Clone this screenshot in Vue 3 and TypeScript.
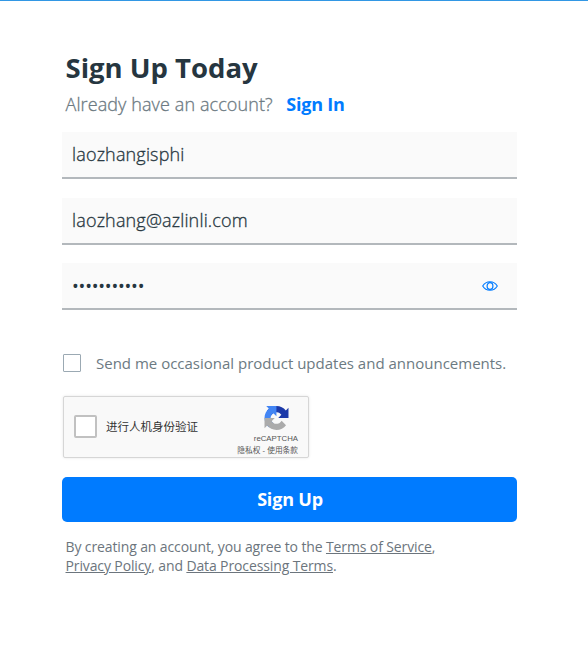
<script setup lang="ts">
import { ref } from 'vue'

const username = ref('laozhangisphi')
const email = ref('laozhang@azlinli.com')
const password = ref('laozhang123')
const showPassword = ref(false)
const updates = ref(false)
const human = ref(false)
</script>

<template>
  <main class="page">
    <header class="intro">
      <h1>Sign Up Today</h1>
      <p><span class="question">Already have an account?</span><a class="signin">Sign In</a></p>
    </header>
    <form class="form" @submit.prevent>
      <div class="field">
        <input v-model="username" type="text" spellcheck="false" />
      </div>
      <div class="field">
        <input v-model="email" type="text" spellcheck="false" />
      </div>
      <div class="field">
        <input v-model="password" class="secret" :type="showPassword ? 'text' : 'password'" />
        <button type="button" class="eye" @click="showPassword = !showPassword">
          <svg width="16" height="10" viewBox="0 0 16 10" fill="none" stroke="#007bff">
            <path d="M.7 5C2.5 2 5 .7 8 .7S13.500 2 15.300 5C13.500 8 11 9.300 8 9.300S2.500 8 .7 5Z" stroke-width="1.100" />
            <ellipse cx="8" cy="5" rx="2.900" ry="3.300" stroke-width="1.200" />
          </svg>
        </button>
      </div>
      <label class="updates">
        <input v-model="updates" type="checkbox" />
        <span>Send me occasional product updates and announcements.</span>
      </label>
      <div class="captcha">
        <label class="verify">
          <input v-model="human" type="checkbox" />
          <span>进行人机身份验证</span>
        </label>
        <div class="brand">
          <svg width="25" height="25" viewBox="0 0 64 64">
            <path fill="#1c3aa9" d="M64 31.955l-.033-1.370V4.687l-7.160 7.160C50.948 4.674 42.033.093 32.050.093c-10.400 0-19.622 4.960-25.458 12.640l11.736 11.860a15.550 15.550 0 0 1 4.754-5.334c2.050-1.600 4.952-2.906 8.968-2.906.485 0 .860.057 1.135.163 4.976.393 9.288 3.140 11.828 7.124l-8.307 8.307L64 31.953" />
            <path fill="#4285f4" d="M31.862.094l-1.370.033H4.594l7.160 7.160C4.580 13.147 0 22.060 0 32.046c0 10.400 4.960 19.622 12.640 25.458L24.500 45.768a15.550 15.550 0 0 1-5.334-4.754c-1.600-2.050-2.906-4.952-2.906-8.968 0-.485.057-.860.163-1.135.393-4.976 3.140-9.288 7.124-11.828l8.307 8.307L31.860.095" />
            <path fill="#ababab" d="M.001 32.045l.033 1.370v25.898l7.160-7.160c5.860 7.173 14.774 11.754 24.760 11.754 10.400 0 19.622-4.960 25.458-12.640l-11.736-11.860a15.550 15.550 0 0 1-4.754 5.334c-2.050 1.600-4.952 2.906-8.968 2.906-.485 0-.860-.057-1.135-.163-4.976-.393-9.288-3.140-11.828-7.124l8.307-8.307c-10.522.040-22.400.066-27.295-.005" />
          </svg>
          <span class="name">reCAPTCHA</span>
          <span class="terms">隐私权 - 使用条款</span>
        </div>
      </div>
      <button class="submit" type="submit">Sign Up</button>
    </form>
    <p class="legal">
      By creating an account, you agree to the <a>Terms of Service</a>,<br />
      <a>Privacy Policy</a>, and <a>Data Processing Terms</a>.
    </p>
  </main>
</template>

<style>
body {
  background: #fff;
}
</style>

<style scoped>
* {
  box-sizing: border-box;
}
.page {
  height: 670px;
  border-top: 1px solid #3297e4;
  padding: 48px 71px 0 62px;
  font-family: 'Open Sans', sans-serif;
  color: #6c7a82;
}
.intro {
  height: 83px;
  padding-left: 3.5px;
}
h1 {
  margin: 0;
  font-size: 27.5px;
  font-weight: 700;
  line-height: 37px;
  color: #263640;
}
.intro p {
  margin: 6px 0 0;
  font-size: 18px;
  line-height: 25px;
}
.question {
  font-weight: 300;
  letter-spacing: 0.1px;
  -webkit-text-stroke: 0.3px currentColor;
}
.signin {
  margin-left: 13.5px;
  font-weight: 700;
  letter-spacing: -0.2px;
  color: #007bff;
}
.form {
  display: flex;
  flex-direction: column;
}
.field {
  display: flex;
  align-items: center;
  height: 47px;
  margin-bottom: 19px;
  border-bottom: 2px solid #b3b8bc;
  background: #fafafa;
}
.field:nth-child(2) {
  margin-bottom: 18px;
}
.field input {
  flex: 1;
  min-width: 0;
  height: 45px;
  padding: 0 10px 2px;
  border: 0;
  outline: 0;
  background: transparent;
  font: 300 18px 'Open Sans', sans-serif;
  letter-spacing: 0.16px;
  color: #263640;
  -webkit-text-stroke: 0.3px currentColor;
}
.field .secret {
  padding-bottom: 0;
}
.field .secret[type='password'] {
  font-weight: 400;
  letter-spacing: -0.2px;
  -webkit-text-stroke: 0;
}
.eye {
  display: flex;
  margin-right: 19px;
  padding: 0;
  border: 0;
  background: none;
}
.updates {
  display: flex;
  align-items: center;
  height: 20px;
  margin-top: 24px;
  font-size: 15px;
}
input[type='checkbox'] {
  appearance: none;
  margin: 0;
  background: #fff;
}
.updates input {
  width: 18px;
  height: 18px;
  margin: 0 15px 0 1px;
  border: 1px solid #9ba9b3;
  border-radius: 1px;
}
.captcha {
  display: flex;
  justify-content: space-between;
  width: 246px;
  height: 62px;
  margin: 23px 0 19px 1px;
  border: 1px solid #d6d6d6;
  border-radius: 2px;
  background: #f9f9f9;
  box-shadow: 0 0 3px rgba(0, 0, 0, 0.1);
}
.verify {
  display: flex;
  align-items: center;
  padding: 0 0 2px 10px;
  font: 11.5px 'Noto Sans CJK SC', sans-serif;
  color: #333;
}
.verify input {
  width: 23px;
  height: 23px;
  margin-right: 9px;
  border: 2px solid #c1c1c1;
  border-radius: 2px;
}
.brand {
  display: flex;
  flex-direction: column;
  align-items: flex-end;
  padding: 9px 10px 0 0;
  font-family: 'Liberation Sans', 'Noto Sans CJK SC', sans-serif;
  color: #555;
}
.brand svg {
  margin-right: 9px;
}
.name {
  margin-top: 3px;
  font-size: 7.8px;
  line-height: 11px;
}
.terms {
  font-size: 7.7px;
  line-height: 13px;
  white-space: nowrap;
}
.submit {
  height: 45px;
  padding: 0 0 2px 1px;
  border: 0;
  border-radius: 5px;
  background: #007bff;
  font: 700 18px 'Open Sans', sans-serif;
  letter-spacing: -0.2px;
  color: #fff;
}
.legal {
  margin: 15px 0 0 3.5px;
  font-size: 14px;
  line-height: 19px;
  letter-spacing: -0.12px;
  color: #6c757d;
}
.legal a {
  text-decoration: underline;
}
</style>
